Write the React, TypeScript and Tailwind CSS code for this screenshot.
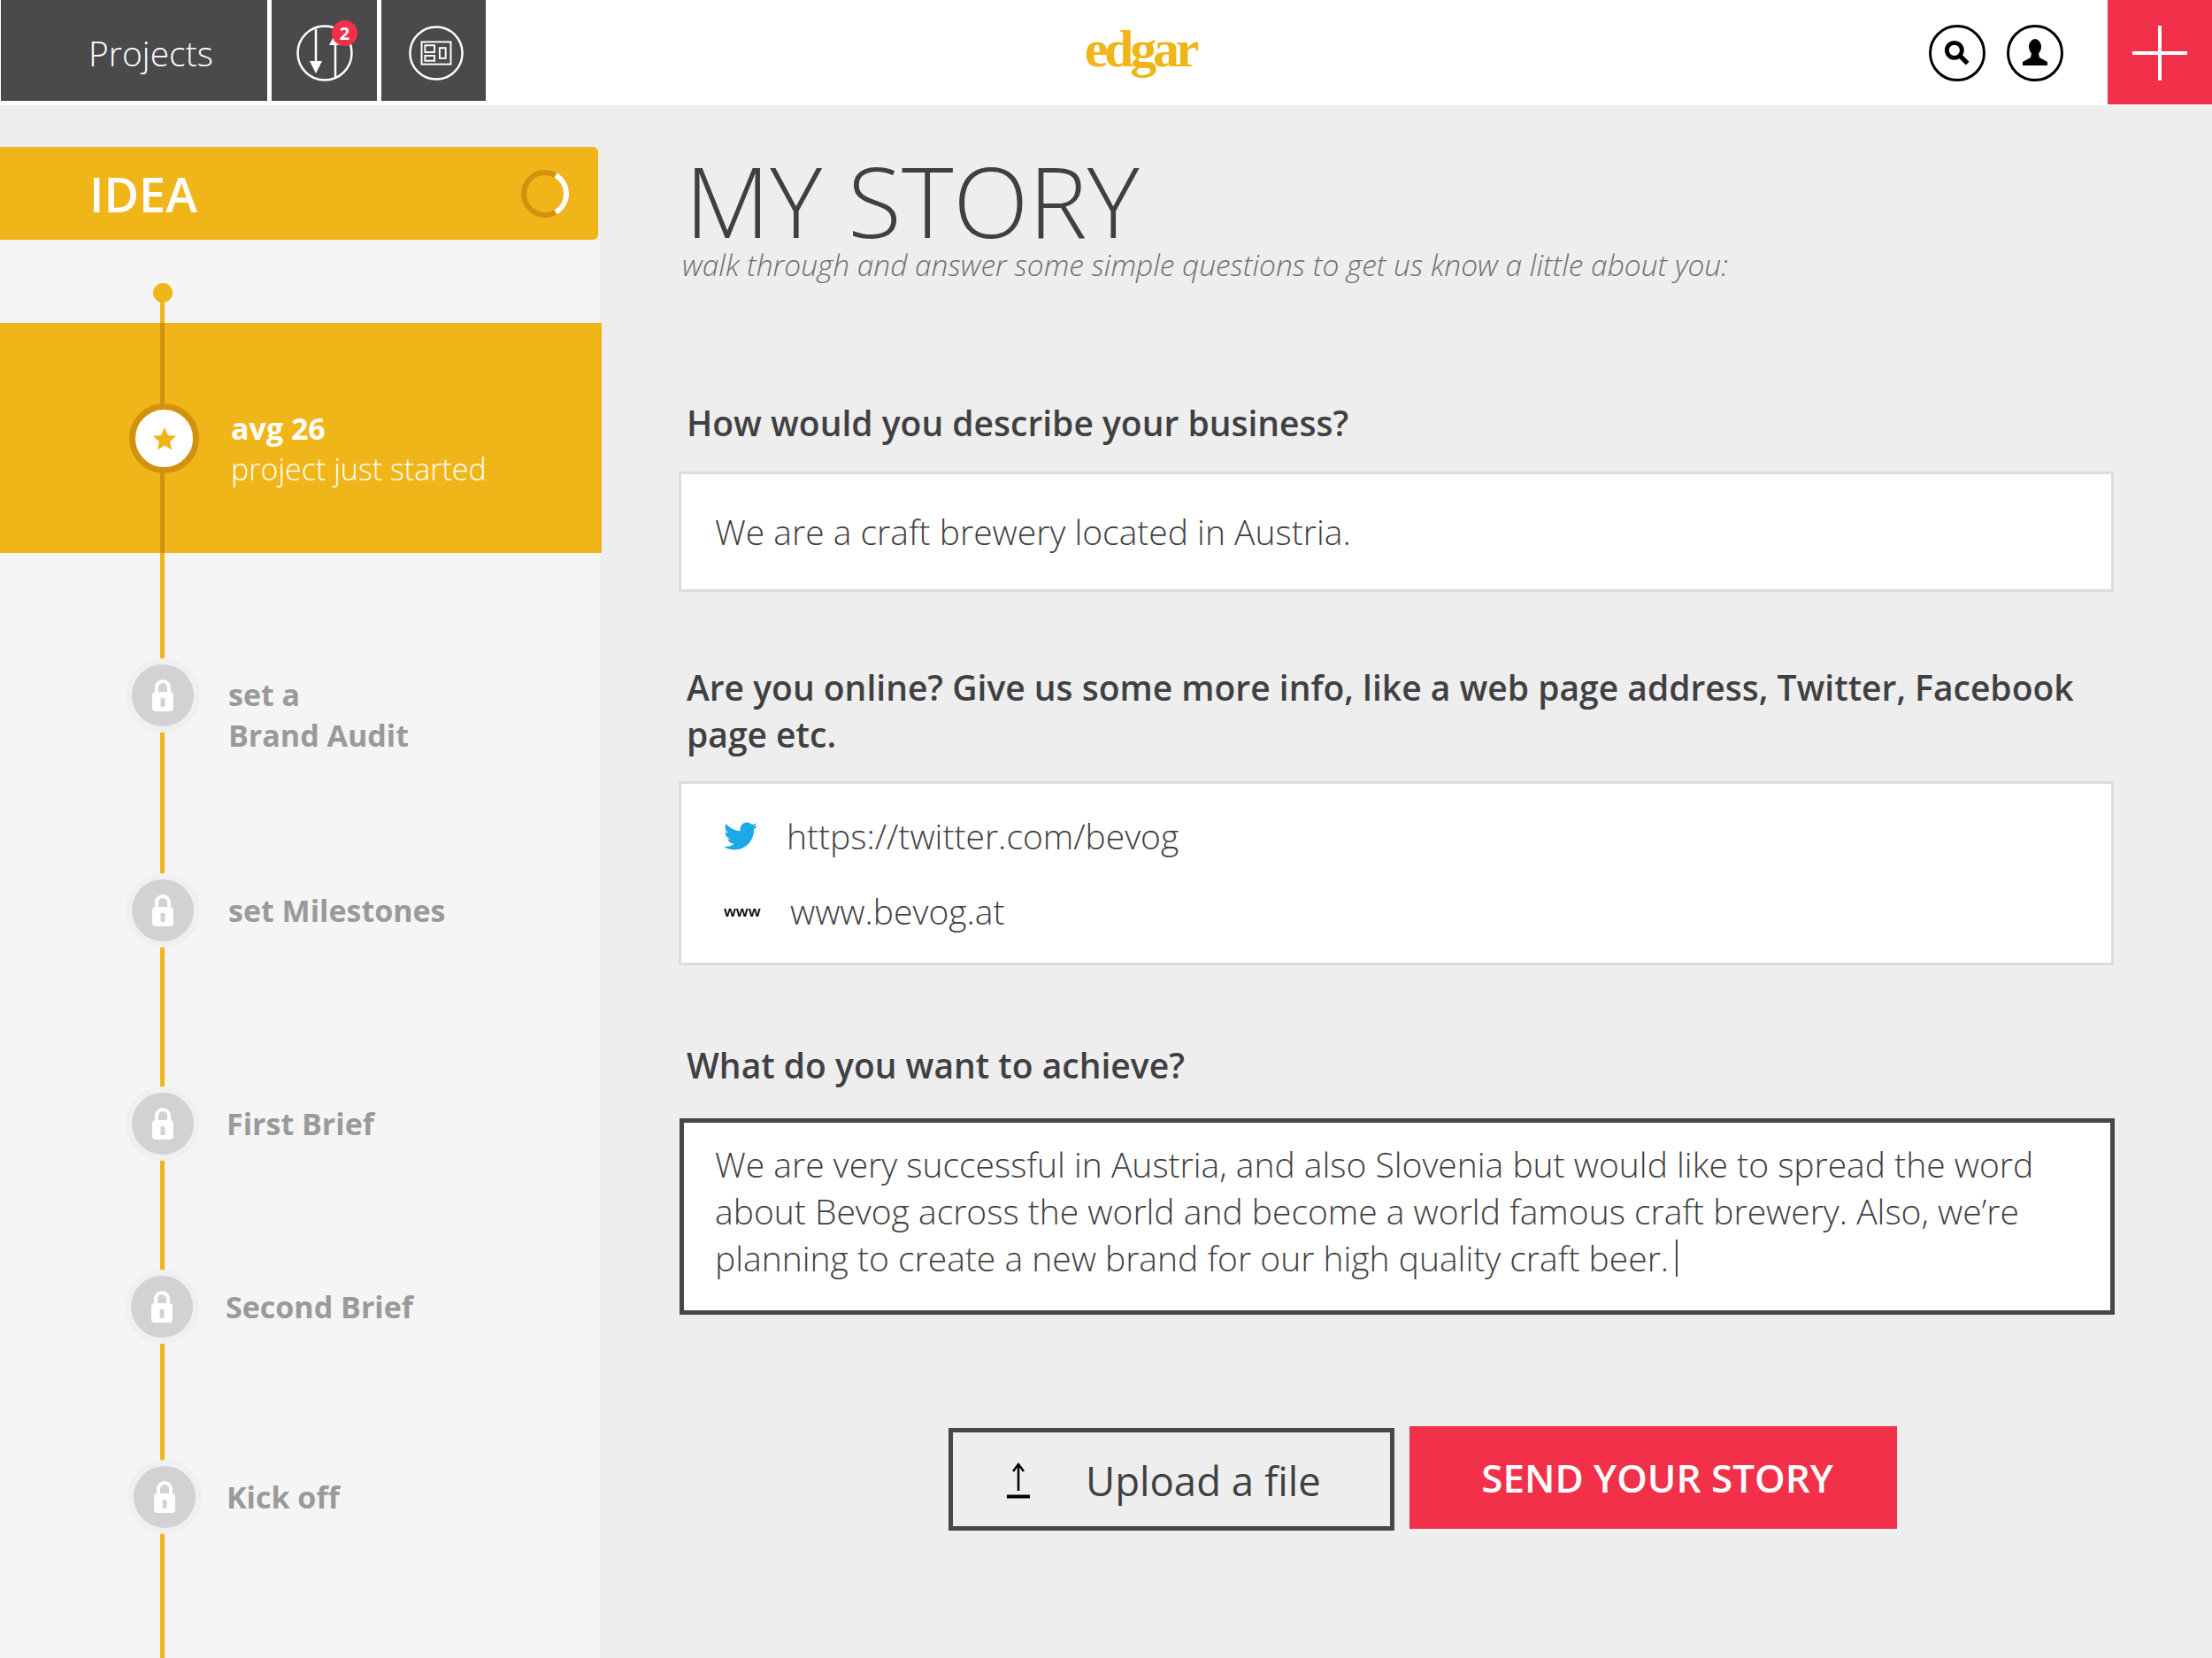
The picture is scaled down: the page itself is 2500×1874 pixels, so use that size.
import { FaTwitter } from "react-icons/fa";

const steps = [
  { label: ["set a", "Brand Audit"], row: "mt-[119px] pl-[142px] gap-[32px]", text: "mt-[44px]" },
  { label: ["set Milestones"], row: "mt-[159px] pl-[142px] gap-[32px]", text: "-mt-[1px]" },
  { label: ["First Brief"], row: "mt-[157px] pl-[142px] gap-[30px]", text: "-mt-[1px]" },
  { label: ["Second Brief"], row: "mt-[123px] pl-[141px] gap-[30px]", text: "-mt-[1px]" },
  { label: ["Kick off"], row: "mt-[131px] pl-[144px] gap-[28px]", text: "-mt-[1px]" },
];

const LockIcon = () => (
  <svg width="26" height="38" viewBox="0 0 26 38">
    <path d="M6 17V10a7 7 0 0 1 14 0v7" fill="none" stroke="#fff" strokeWidth="4" />
    <rect x="1" y="15" width="24" height="22" rx="4" fill="#fff" />
    <rect x="10.5" y="22" width="5" height="10" rx="1" fill="#d2d2d2" />
  </svg>
);

const Header = () => (
  <header className="flex h-[119px] items-start bg-white">
    <div className="ml-[1px] flex h-[114px] w-[301px] items-center bg-[#4a4a4c] pl-[99px] pt-[6px] text-[39px] font-light text-white">
      Projects
    </div>
    <div className="relative ml-[5px] flex h-[114px] w-[119px] items-center justify-center bg-[#4a4a4c] pt-[6px]">
      <svg width="66" height="66" viewBox="0 0 66 66" fill="none" stroke="#fff" strokeWidth="2.5">
        <circle cx="33" cy="33" r="30.5" />
        <path d="M23 6v38M45 62V22" />
        <path d="M16 42h14l-7 14zM38 24h14l-7-14z" fill="#fff" stroke="none" />
      </svg>
      <span className="absolute left-[68px] top-[23px] flex h-[29px] w-[29px] items-center justify-center rounded-full bg-[#f2304a] text-[20px] font-bold text-white">
        2
      </span>
    </div>
    <div className="ml-[5px] flex h-[114px] w-[118px] items-center justify-center bg-[#4a4a4c] pl-[5px] pt-[6px]">
      <svg width="64" height="64" viewBox="0 0 66 66" fill="none" stroke="#fff" strokeWidth="2.5">
        <circle cx="33" cy="33" r="30.5" />
        <rect x="16" y="20" width="34" height="26" strokeWidth="2" />
        <rect x="20" y="24" width="11" height="8" strokeWidth="2" />
        <rect x="20" y="36" width="11" height="6" strokeWidth="2" />
        <rect x="37" y="27" width="7" height="12" strokeWidth="2" />
      </svg>
    </div>
    <div className="flex flex-1 justify-center pr-[152px]">
      <span className="mt-[20px] font-['Liberation_Serif',serif] text-[60px] leading-[70px] font-bold tracking-[-0.07em] text-[#f0b518]">
        edgar
      </span>
    </div>
    <div className="mt-[28px] flex h-[64px] w-[64px] items-center justify-center rounded-full border-[3px] border-black">
      <svg width="34" height="34" viewBox="0 0 32 32" fill="none" stroke="#000">
        <circle cx="13" cy="13" r="8" strokeWidth="4.5" />
        <path d="M19 19l8 8" strokeWidth="5" />
      </svg>
    </div>
    <div className="mt-[28px] ml-[24px] mr-[50px] flex h-[64px] w-[64px] items-center justify-center rounded-full border-[3px] border-black">
      <svg width="34" height="34" viewBox="0 0 34 34" fill="#000">
        <ellipse cx="17" cy="10" rx="7" ry="9" />
        <path d="M13 17h8l1 5 9 5v4H3v-4l9-5z" />
      </svg>
    </div>
    <div className="flex h-[118px] w-[118px] items-center justify-center bg-[#f2304a] pt-[2px]">
      <svg width="62" height="62" viewBox="0 0 62 62" fill="#fff">
        <rect x="29" y="0" width="4" height="62" />
        <rect x="0" y="29" width="62" height="4" />
      </svg>
    </div>
  </header>
);

const Sidebar = () => (
  <aside className="relative flex h-[1755px] w-[680px] shrink-0 flex-col overflow-hidden">
    <div className="mt-[47px] flex h-[105px] w-[676px] items-center justify-between rounded-r-[6px] bg-[#f0b518] pl-[101px] pr-[32px] text-[54px] leading-none font-semibold text-white">
      IDEA
      <svg width="56" height="56" viewBox="0 0 56 56" fill="none" strokeWidth="6">
        <circle cx="28" cy="28" r="24" stroke="#d2920f" />
        <path d="M40 7.2a24 24 0 0 1 0 41.6" stroke="#fff" />
      </svg>
    </div>
    <div className="relative w-[678px] flex-1 bg-[#f5f5f5]">
      <span className="absolute left-[173px] top-[49px] h-[22px] w-[22px] rounded-full bg-[#f0b518]" />
      <span className="absolute bottom-0 left-[181px] top-[60px] w-[5px] bg-[#f0b518]" />
      <div className="relative mt-[94px] flex h-[260px] w-[680px] items-center bg-[#f0b518] pl-[146px]">
        <span className="absolute bottom-0 left-[181px] top-0 w-[5px] bg-[#d2920f]" />
        <span className="relative mt-[1px] flex h-[79px] w-[79px] items-center justify-center rounded-full border-[7px] border-[#d2920f] bg-white">
          <svg width="30" height="30" viewBox="0 0 24 24" fill="#f0b518">
            <path d="M12 1.5l3.1 7.2 7.4.6-5.6 5 1.7 7.6L12 18l-6.6 3.9 1.7-7.6-5.6-5 7.4-.6z" />
          </svg>
        </span>
        <div className="ml-[36px] mt-[24px] text-white">
          <p className="text-[34px] leading-[46px] font-bold">avg 26</p>
          <p className="text-[34px] leading-[46px] font-light">project just started</p>
        </div>
      </div>
      {steps.map((s) => (
        <div key={s.label[0]} className={`relative flex h-[84px] items-center ${s.row}`}>
          <span className="flex h-[84px] w-[84px] shrink-0 items-center justify-center rounded-full border-[7px] border-[#f0f0f0] bg-[#d2d2d2]">
            <LockIcon />
          </span>
          <p className={`text-[34px] leading-[46px] font-bold text-[#999a9c] ${s.text}`}>
            {s.label.map((l) => (
              <span key={l} className="block">{l}</span>
            ))}
          </p>
        </div>
      ))}
    </div>
  </aside>
);

const Story = () => (
  <main className="flex-1 pl-[87px] pr-[111px] text-[#404042]">
    <h1 className="mt-[42px] pl-[7px] text-[111.5px] leading-[130px] font-light">MY STORY</h1>
    <p className="mt-[-17px] ml-[4px] text-[33.5px] leading-[50px] font-light italic text-[#6e6e70]">
      walk through and answer some simple questions to get us know a little about you:
    </p>

    <h2 className="mt-[127px] ml-[9px] text-[39px] leading-[53px] font-semibold">
      How would you describe your business?
    </h2>
    <div className="mt-[29px] flex h-[136px] items-center border-[3px] border-[#dcdcdc] bg-white pl-[38px] text-[39px] font-light">
      We are a craft brewery located in Austria.
    </div>

    <h2 className="mt-[81px] ml-[9px] text-[39px] leading-[53px] font-semibold">
      Are you online? Give us some more info, like a web page address, Twitter, Facebook page etc.
    </h2>
    <div className="mt-[27px] flex h-[208px] flex-col justify-center gap-[29px] border-[3px] border-[#dcdcdc] bg-white pl-[48px] text-[39px] leading-[56px] font-light">
      <div className="flex items-center">
        <FaTwitter className="h-[42px] w-[38px] text-[#1da8e8]" />
        <span className="ml-[33px]">https://twitter.com/bevog</span>
      </div>
      <div className="flex items-center">
        <span className="w-[40px] text-[17px] font-semibold text-black">www</span>
        <span className="ml-[35px]">www.bevog.at</span>
      </div>
    </div>

    <h2 className="mt-[86px] ml-[9px] text-[39px] leading-[53px] font-semibold">
      What do you want to achieve?
    </h2>
    <div className="mt-[34px] ml-[1px] mr-[-1px] h-[222px] border-[5px] border-[#48484a] bg-white pl-[35px] pr-[60px] pt-[20px] text-[39px] leading-[53px] font-light">
      We are very successful in Austria, and also Slovenia but would like to spread the word about Bevog across the
      world and become a world famous craft brewery. Also, we’re planning to create a new brand for our high quality
      craft beer.
      <span className="ml-[8px] inline-block h-[42px] w-[2px] translate-y-[6px] bg-[#48484a]" />
    </div>

    <div className="mt-[126px] flex items-start pl-[305px]">
      <button className="mt-[2px] flex h-[116px] w-[504px] items-center border-[5px] border-[#48484a] pl-[60px] pt-[2px] text-[45.5px] font-medium">
        <svg width="28" height="42" viewBox="0 0 28 42" fill="none" stroke="#000">
          <path d="M14 33V3M8 11l6-8 6 8" strokeWidth="2.5" />
          <path d="M1 39.5h26" strokeWidth="4" />
        </svg>
        <span className="ml-[62px]">Upload a file</span>
      </button>
      <button className="ml-[17px] h-[116px] w-[551px] bg-[#f2304a] pl-[9px] text-[44px] font-semibold text-white">
        SEND YOUR STORY
      </button>
    </div>
  </main>
);

export default function App() {
  return (
    <div className="h-[1874px] w-[2500px] overflow-hidden bg-[#eeeeee] font-['Open_Sans',sans-serif]">
      <Header />
      <div className="flex">
        <Sidebar />
        <Story />
      </div>
    </div>
  );
}
